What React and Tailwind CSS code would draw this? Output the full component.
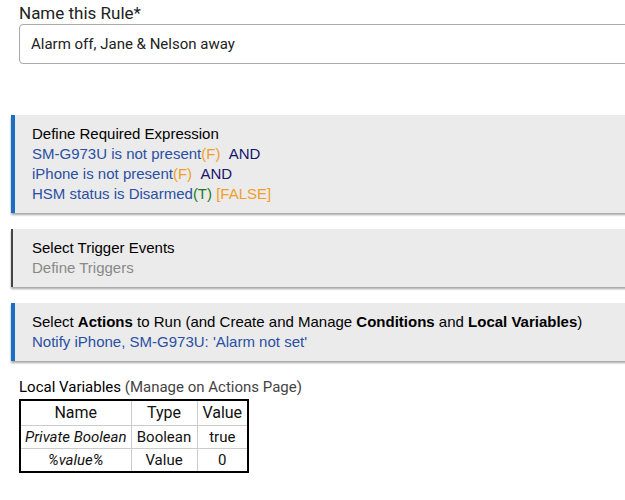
import React from 'react';

const arial = { fontFamily: '"Liberation Sans", Arial, sans-serif' };
const roboto = { fontFamily: 'Roboto, "Liberation Sans", sans-serif' };

const Panel = ({ accent, children }) => (
  <div
    className={`ml-[11px] w-[640px] bg-[#ebebeb] py-[9px] text-[15px] leading-[20px] shadow-[0_2px_2px_rgba(0,0,0,0.35)] ${
      accent === 'blue' ? 'border-l-4 border-[#1a6fc4] pl-[17px]' : 'border-l-2 border-[#444444] pl-[19px]'
    }`}
    style={arial}
  >
    {children}
  </div>
);

const F = ({ children = 'F' }) => <span className="text-[#f0a02a]">({children})</span>;

const variables = [
  { name: 'Private Boolean', type: 'Boolean', value: 'true' },
  { name: '%value%', type: 'Value', value: '0' },
];

export default function App() {
  return (
    <div className="w-[625px] h-[500px] overflow-hidden bg-white">
      {/* Rule name */}
      <div className="pl-[19px] pt-[3px]" style={roboto}>
        <label className="block text-[17px] leading-[20px] text-[#222]">Name this Rule*</label>
        <div className="mt-[1px] h-[40px] w-[640px] rounded-[4px] border border-[#a9a9a9] pl-[11px] flex items-center text-[15px] text-[#222]">
          Alarm off, Jane &amp; Nelson away
        </div>
      </div>

      <div className="mt-[51px] flex flex-col gap-4">
        {/* Required expression */}
        <Panel accent="blue">
          <div className="text-black">Define Required Expression</div>
          <div className="text-[#2a4fa3]">
            SM-G973U is not present<F /> <span className="text-[#16166b]">&nbsp;AND</span>
          </div>
          <div className="text-[#2a4fa3]">
            iPhone is not present<F /> <span className="text-[#16166b]">&nbsp;AND</span>
          </div>
          <div className="text-[#2a4fa3]">
            HSM status is Disarmed<span className="text-[#1c7a1c]">(T)</span>{' '}
            <span className="text-[#f0a02a]">[FALSE]</span>
          </div>
        </Panel>

        {/* Triggers */}
        <Panel accent="gray">
          <div className="text-black">Select Trigger Events</div>
          <div className="text-[#888888]">Define Triggers</div>
        </Panel>

        {/* Actions */}
        <Panel accent="blue">
          <div className="text-black">
            Select <b>Actions</b> to Run (and Create and Manage <b>Conditions</b> and <b>Local Variables</b>)
          </div>
          <div className="text-[#2a4fa3]">Notify iPhone, SM-G973U: 'Alarm not set'</div>
        </Panel>
      </div>

      {/* Local variables */}
      <div className="pl-[19px] mt-[16px]" style={roboto}>
        <div className="text-[15px] leading-[20px] text-[#444]">
          <span className="text-black">Local Variables</span> (Manage on Actions Page)
        </div>
        <table className="mt-[2px] table-fixed w-[228px] border-collapse border-2 border-black text-[15px] text-[#111] whitespace-nowrap">
          <thead>
            <tr className="h-[24px]">
              <th className="w-[111px] border border-[#cccccc] font-normal text-[16px] p-0">Name</th>
              <th className="w-[66px] border border-[#cccccc] font-normal text-[16px] p-0">Type</th>
              <th className="w-[51px] border border-[#cccccc] font-normal text-[16px] p-0">Value</th>
            </tr>
          </thead>
          <tbody>
            {variables.map((v) => (
              <tr key={v.name} className="h-[23px]">
                <td className="border border-[#cccccc] text-center italic p-0 leading-[18px]">{v.name}</td>
                <td className="border border-[#cccccc] text-center p-0 leading-[18px]">{v.type}</td>
                <td className="border border-[#cccccc] text-center p-0 leading-[18px]">{v.value}</td>
              </tr>
            ))}
          </tbody>
        </table>
      </div>
    </div>
  );
}
